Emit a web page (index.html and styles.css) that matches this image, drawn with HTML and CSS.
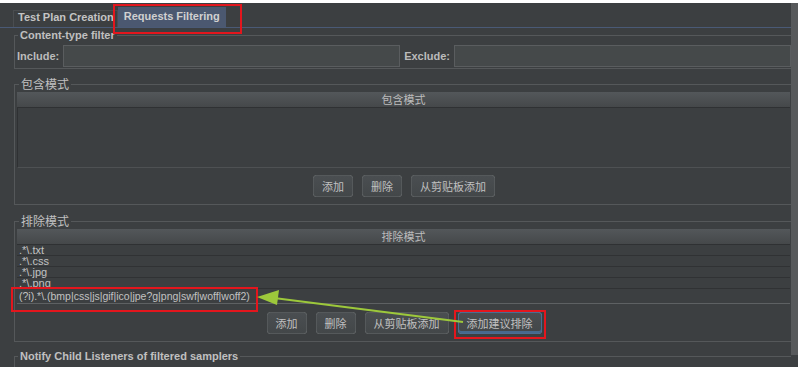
FILE: index.html
```html
<!DOCTYPE html>
<html lang="zh-CN">
<head>
	<meta charset="UTF-8" />
	<title>Requests Filtering</title>
	<link rel="stylesheet" href="styles.css">
</head>
<body>
	<div class="window">
		<div class="main">
			<div class="tabs">
				<div class="tab">Test Plan Creation</div>
				<div class="tab active">Requests Filtering</div>
			</div>
			<div class="content">
				<fieldset class="group">
					<legend class="bold">Content-type filter</legend>
					<div class="filterRow">
						<span class="bold">Include:</span><div class="field"></div>
						<span class="bold">Exclude:</span><div class="field"></div>
					</div>
				</fieldset>
				<fieldset class="group include">
					<legend class="cjk">包含模式</legend>
					<div class="table">
						<div class="thead cjk">包含模式</div>
						<div class="tbody empty"></div>
					</div>
					<div class="buttons">
						<button type="button">添加</button>
						<button type="button">删除</button>
						<button type="button">从剪贴板添加</button>
					</div>
				</fieldset>
				<fieldset class="group exclude">
					<legend class="cjk">排除模式</legend>
					<div class="table">
						<div class="thead cjk">排除模式</div>
						<div class="tbody">
							<div class="row">.*\.txt</div>
							<div class="row">.*\.css</div>
							<div class="row">.*\.jpg</div>
							<div class="row">.*\.png</div>
							<div class="row">(?i).*\.(bmp|css|js|gif|ico|jpe?g|png|swf|woff|woff2)</div>
						</div>
					</div>
					<div class="buttons">
						<button type="button">添加</button>
						<button type="button">删除</button>
						<button type="button">从剪贴板添加</button>
						<button type="button" class="focused">添加建议排除</button>
					</div>
				</fieldset>
				<fieldset class="group last">
					<legend class="bold">Notify Child Listeners of filtered samplers</legend>
				</fieldset>
			</div>
		</div>
		<div class="scrollbar"></div>
		<!-- annotations drawn over the screenshot -->
		<svg class="marks" viewBox="0 0 803 370" width="803" height="370">
			<rect x="114" y="5" width="127" height="28" />
			<rect x="12" y="288" width="245" height="23" />
			<rect x="455" y="311" width="90" height="27" />
			<line x1="463" y1="322" x2="274" y2="298" />
			<polygon points="257,297 279,290 277,305" />
		</svg>
	</div>
</body>
</html>
```

FILE: styles.css
```css
html, body {
	margin: 0;
	padding: 0;
	background-color: #fff;
}
body {
	padding-top: 3px;
	font-family: "Liberation Sans", Arial, "Noto Sans CJK SC", sans-serif;
	font-size: 11px;
	color: #bbbbbb;
}
.window {
	position: relative;
	width: 798px;
	height: 364px;
	background-color: #3c3f41;
	display: flex;
	overflow: hidden;
}
.main {
	width: 791px;
	display: flex;
	flex-direction: column;
}
.scrollbar {
	width: 7px;
	height: 352px;
	background-color: #57595b;
}
.bold {
	font-weight: bold;
}
.cjk {
	font-family: "Noto Sans CJK SC", sans-serif;
}
.tabs {
	flex-shrink: 0;
	height: 24px;
	padding-left: 13px;
	display: flex;
	align-items: flex-end;
	border-bottom: 1px solid #4a5a76;
}
.tab {
	height: 16px;
	line-height: 12px;
	padding: 0 3px 0 4px;
	font-weight: bold;
	border: 1px solid #4a4d50;
	border-bottom: none;
	color: #c4c4c4;
}
.tab.active {
	height: 20px;
	line-height: 18px;
	padding: 0 6px;
	border: none;
	background-color: #4b5870;
	color: #d0d0d0;
}
.content {
	padding-left: 14px;
	flex: 1;
	min-height: 0;
}
.group {
	margin: 0;
	padding: 0 0 0 2px;
	border: 1px solid #55585a;
	border-right: none;
	min-width: 0;
}
.group legend {
	padding: 0 2px;
	margin-left: 1px;
	line-height: 14px;
	color: #c0c0c0;
}
.group legend.cjk {
	font-size: 12px;
	line-height: 16px;
	margin-left: 2px;
}
.filterRow {
	display: flex;
	align-items: center;
	gap: 4px;
	padding: 3px 0 0;
	height: 22px;
	margin-bottom: 1px;
}
.field {
	flex: 1;
	height: 20px;
	background-color: #45494a;
	border: 1px solid #5a5d5f;
}
.table {
	margin-right: 1px;
}
.thead {
	height: 15px;
	line-height: 15px;
	text-align: center;
	font-size: 11px;
	background-image: linear-gradient(to bottom, #53575a, #45484a);
	border-bottom: 1px solid #2f3133;
	color: #bcbcbc;
}
.tbody {
	border-bottom: 1px solid #5e6163;
}
.tbody.empty {
	height: 59px;
	border-left: 1px solid #2f3133;
	border-bottom-color: #4e5153;
}
.row {
	height: 10px;
	line-height: 10px;
	padding-left: 2px;
	border-bottom: 1px solid #303234;
	color: #c2c2c2;
	white-space: nowrap;
}
.row:last-child {
	height: 14px;
	line-height: 14px;
	font-size: 10.5px;
	border-bottom: none;
}
.buttons {
	display: flex;
	justify-content: center;
	gap: 9px;
	margin: 7px 0 7px;
}
button {
	height: 22px;
	padding: 0 8px;
	font-family: "Noto Sans CJK SC", sans-serif;
	font-size: 11px;
	color: #c0c0c0;
	background-image: linear-gradient(to bottom, #4a4e51, #434749);
	border: 1px solid #55595b;
	border-radius: 3px;
	outline: none;
}
button.focused {
	border-color: #4a6d92;
	box-shadow: inset 0 -2px 0 #46698e;
}
.group.include {
	margin-top: 7px;
}
.group.exclude {
	margin-top: 8px;
}
.exclude .buttons {
	margin-top: 8px;
}
.group.last {
	margin-top: 7px;
	height: 30px;
}
.marks {
	position: absolute;
	top: -3px;
	left: 0;
	pointer-events: none;
}
.marks rect {
	fill: none;
	stroke: #e3161d;
	stroke-width: 2;
}
.marks line {
	stroke: #9dc83b;
	stroke-width: 2;
}
.marks polygon {
	fill: #9dc83b;
}
```
